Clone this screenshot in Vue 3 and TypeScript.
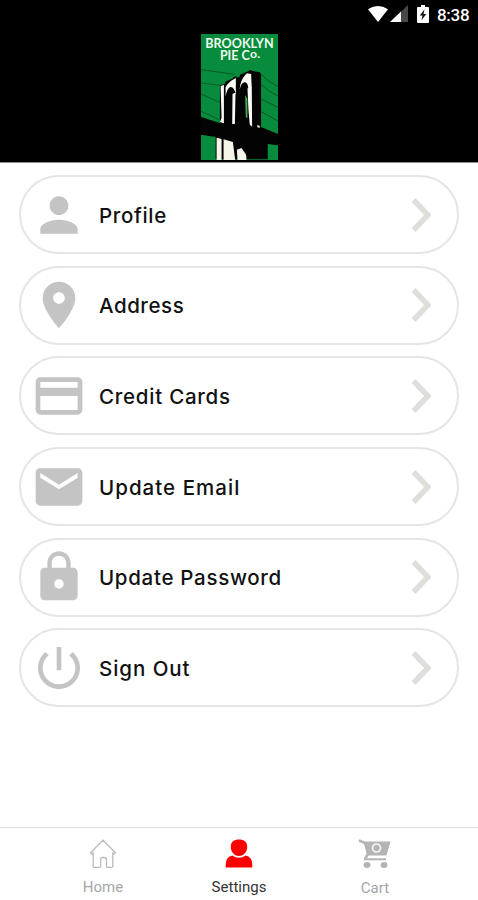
<script setup lang="ts">
interface Row { id: string; label: string; path: string }

const rows: Row[] = [
  { id: 'profile', label: 'Profile', path: 'M12 12c2.21 0 4-1.79 4-4s-1.79-4-4-4-4 1.79-4 4 1.79 4 4 4zm0 2c-2.67 0-8 1.34-8 4v2h16v-2c0-2.66-5.33-4-8-4z' },
  { id: 'address', label: 'Address', path: 'M12 2C8.13 2 5 5.13 5 9c0 5.25 7 13 7 13s7-7.75 7-13c0-3.87-3.13-7-7-7zm0 9.5c-1.38 0-2.5-1.12-2.5-2.5s1.12-2.5 2.5-2.5 2.5 1.12 2.5 2.5-1.12 2.5-2.5 2.5z' },
  { id: 'cards', label: 'Credit Cards', path: 'M20 4H4c-1.11 0-1.99.89-1.99 2L2 18c0 1.11.89 2 2 2h16c1.11 0 2-.89 2-2V6c0-1.11-.89-2-2-2zm0 14H4v-6h16v6zm0-9.500H4V6h16v2.500z' },
  { id: 'email', label: 'Update Email', path: 'M20 4H4c-1.1 0-1.99.9-1.99 2L2 18c0 1.1.9 2 2 2h16c1.1 0 2-.9 2-2V6c0-1.1-.9-2-2-2zm0 4l-8 5-8-5V6l8 5 8-5v2z' },
  { id: 'password', label: 'Update Password', path: 'M18 8h-1V6c0-2.76-2.24-5-5-5S7 3.24 7 6v2H6c-1.1 0-2 .9-2 2v10c0 1.1.9 2 2 2h12c1.1 0 2-.9 2-2V10c0-1.1-.9-2-2-2zm-6 9c-1.1 0-2-.9-2-2s.9-2 2-2 2 .9 2 2-.9 2-2 2zm3.1-9H8.9V6c0-1.71 1.39-3.1 3.1-3.1s3.1 1.39 3.1 3.1v2z' },
  { id: 'signout', label: 'Sign Out', path: 'M13 3h-2v10h2V3zm4.83 2.17l-1.42 1.42C17.99 7.86 19 9.81 19 12c0 3.87-3.13 7-7 7s-7-3.13-7-7c0-2.19 1.01-4.14 2.58-5.42L6.17 5.17C4.23 6.82 3 9.26 3 12c0 4.97 4.03 9 9 9s9-4.03 9-9c0-2.74-1.23-5.18-3.17-6.83z' },
]
</script>

<template>
  <div class="screen">
    <header class="top">
      <div class="status">
        <svg class="wifi" viewBox="0 0 20 16"><path d="M0 3.2Q10-3 20 3.2L10 16z" fill="#fff" /></svg>
        <svg class="signal" viewBox="0 0 18 17"><path d="M0 17L18 0V17z" fill="#484848" /><path d="M0 17L11 6.6V17z" fill="#fff" /></svg>
        <svg class="battery" viewBox="0 0 12 18"><path d="M1 2h3V0h4v2h3q1 0 1 1v14q0 1-1 1H1q-1 0-1-1V3q0-1 1-1z" fill="#fff" /><path d="M7.5 4.5L2.7 10.6h2.8L4.5 15.2l4.8-6.1H6.5z" fill="#111" /></svg>
        <span class="time">8:38</span>
      </div>
      <svg class="logo" viewBox="33 27 232 378" preserveAspectRatio="none">
        <rect x="33" y="27" width="232" height="378" fill="#078b3c" />
        <path fill="none" stroke="#045a29" stroke-width="3" d="M33 134L134 148M33 174L92 181M33 207L90 232M33 259L88 284M214 148Q235 172 265 184M214 178Q235 200 265 213M214 222L265 247M214 260L265 288" />
        <path d="M33 276L90 294V181l16-5v-6l24-10v-4l10-2v4l10-3v-6l22-9 10-5 6 3 22 4 4 5v159l51 21v34l-31-4v46H77v-67l-44-7z" fill="#020302" />
        <path d="M92 184l10-5v116l-12-4 5-13zM107 215V187q9-17 26-25l5-3v50q-5-24-16-23-10 2-15 29zM128 206l9-3-2 94h-8zM149 196q2-32 22-51l13 2 2 44-10 2q-2-24-13-21-9 2-14 24zM173 190l13-4 1 119-7-6-4-43z" fill="#fafaf6" />
        <path d="M166 210l7 12v58l-5-3z" fill="#49ac55" />
        <path d="M80 338l15 4v63H80zM101 343l28 8 7 54h-35zM141 374l14-5 14 20 1 16h-27z" fill="#f6f5ea" />
        <path d="M202 301l8 1v6l-7-1z" fill="#f6f5ea" />
        <text font-size="39">
          <tspan x="46" y="69" textLength="206" lengthAdjust="spacingAndGlyphs">BROOKLYN</tspan>
          <tspan x="90" y="105" textLength="90" lengthAdjust="spacingAndGlyphs">PIE C</tspan><tspan x="181" y="99" font-size="34" textLength="30" lengthAdjust="spacingAndGlyphs">o.</tspan>
        </text>
      </svg>
    </header>

    <main class="list">
      <button v-for="row in rows" :key="row.id" class="row">
        <svg class="icon" viewBox="0 0 24 24"><path :d="row.path" /></svg>
        <span class="label" :class="row.id">{{ row.label }}</span>
        <svg class="chevron" viewBox="0 0 20 36"><path d="M2.500 3L17 18L2.500 33" /></svg>
      </button>
    </main>

    <nav class="tabs">
      <a class="tab">
        <svg viewBox="0 0 28 30" class="tab-icon home"><path d="M1.5 14.7L14 2.2l12.5 12.5-1.5 1.3-1.2-1V28.5q0 .8-1 .8h-4.3q-1 0-1-1v-6.5q0-2.3-2.2-2.3h-1.5q-2.2 0-2.2 2.3v6.5q0 1-1 1H5.2q-1 0-1-.8V15L3 16z" /></svg>
        <span>Home</span>
      </a>
      <a class="tab active">
        <svg viewBox="0 0 28 30" class="tab-icon"><path d="M14 1.5c5 0 8.200 2.500 8.200 7.200 0 5.200-3.500 9.200-8.200 9.200s-8.200-4-8.200-9.200C5.800 4 9 1.500 14 1.500zM7.500 17.400q2.500 2.300 6.500 2.300t6.500-2.300q6.800 1.400 6.800 9.200V29.500H.7v-2.900q0-7.800 6.800-9.200z" fill="red" /></svg>
        <span>Settings</span>
      </a>
      <a class="tab cart">
        <svg viewBox="0 0 34 30" class="tab-icon wide">
          <path d="M1 2.500L7 5l3 11-3 5" fill="none" stroke="#b4b4b4" stroke-width="2.500" />
          <path d="M7.500 3.500h25l-4 14H10z" fill="#b4b4b4" />
          <path d="M6 21.300h22" fill="none" stroke="#b4b4b4" stroke-width="2" />
          <circle cx="18.500" cy="10" r="4" fill="none" stroke="#f5f5f5" stroke-width="1.700" />
          <ellipse cx="9" cy="27" rx="3.400" ry="2.900" fill="#b4b4b4" /><ellipse cx="26" cy="27" rx="3.400" ry="2.900" fill="#b4b4b4" />
        </svg>
        <span>Cart</span>
      </a>
    </nav>
  </div>
</template>

<style>
body { background: #fff; }
</style>
<style scoped>
.screen { width: 478px; height: 900px; display: flex; flex-direction: column; background: #fff; overflow: hidden; }
.top { height: 162px; flex: none; background: #000; display: flex; flex-direction: column; align-items: center; border-bottom: 1px solid #8a8a8a; box-sizing: content-box; }
.status { width: 100%; height: 34px; flex: none; box-sizing: border-box; padding: 5px 9px 0 0; display: flex; justify-content: flex-end; align-items: flex-start; }
.wifi { width: 20px; height: 16px; margin: 1px 2px 0 0; }
.signal { width: 18px; height: 17px; margin-right: 9px; }
.battery { width: 12px; height: 18px; margin-right: 8px; }
.time { font: 500 17px/20px Roboto, sans-serif; color: #fff; width: 32px; white-space: nowrap; letter-spacing: -0.3px; }
.logo { width: 77px; height: 126px; flex: none; }
.logo text { font-family: Lato, sans-serif; font-weight: 700; fill: #effbee; }
.list { flex: 1; padding: 12px 19px 0; display: flex; flex-direction: column; gap: 11.7px; }
.row { height: 79px; flex: none; box-sizing: border-box; border: 2px solid #e5e5e5; border-radius: 40px; background: #fff; display: flex; align-items: center; padding: 0 26px 0 10px; }
.icon { width: 56px; height: 56px; fill: #c4c4c4; flex: none; }
.label { flex: 1; margin-left: 12px; padding-top: 2px; text-align: left; font: 500 20.5px/28px Inter, sans-serif; color: #111; white-space: nowrap; }
.profile { letter-spacing: 0.65px; }
.address { letter-spacing: 0.55px; }
.cards { letter-spacing: 0.75px; }
.email { letter-spacing: 1.03px; }
.password { letter-spacing: 0.7px; }
.signout { letter-spacing: 0.95px; }
.chevron { width: 20px; height: 36px; fill: none; stroke: #dededb; stroke-width: 5.5; }
.tabs { height: 73px; flex: none; box-sizing: border-box; border-top: 1.5px solid #dedede; display: flex; padding: 0 35px; }
.tab { flex: 1; display: flex; flex-direction: column; align-items: center; padding-top: 10px; font: 15px/18px Roboto, sans-serif; color: #a6a6a6; gap: 10px; }
.tab.active { color: #333; }
.tab-icon { width: 28px; height: 30px; }
.wide { width: 34px; }
.home path { fill: none; stroke: #bbb; stroke-width: 1.3; }
.cart { gap: 11px; }
</style>
